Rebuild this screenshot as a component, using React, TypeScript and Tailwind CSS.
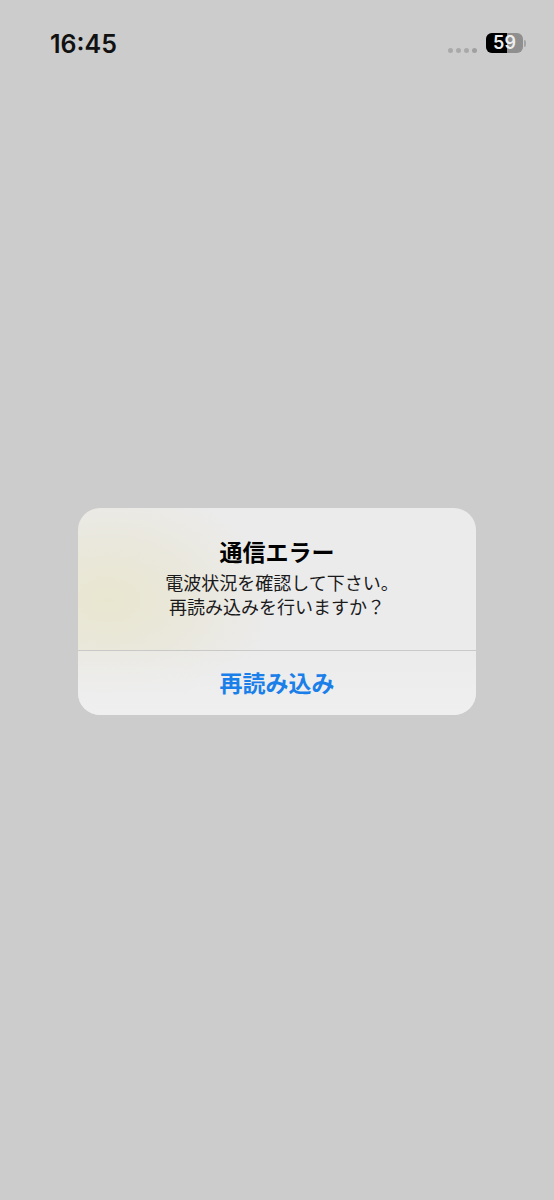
export default function App() {
  return (
    <div className="w-[554px] h-[1200px] bg-[#cccccc] flex flex-col font-['Inter','Noto_Sans_CJK_JP',sans-serif]">
      {/* Status bar */}
      <div className="flex items-center justify-between h-[20px] mt-[33px] pl-[50px] pr-[28px]">
        <span className="mt-[2px] text-[25px] leading-[20px] font-semibold text-[#111111]">16:45</span>
        <div className="flex items-center">
          <div className="flex items-center gap-[3px] mt-[14px] mr-[9px]">
            <span className="w-[5px] h-[5px] rounded-full bg-[#a9a9a9]" />
            <span className="w-[5px] h-[5px] rounded-full bg-[#a9a9a9]" />
            <span className="w-[5px] h-[5px] rounded-full bg-[#a9a9a9]" />
            <span className="w-[5px] h-[5px] rounded-full bg-[#a0a0a0]" />
          </div>
          <div className="relative flex w-[37px] h-[20px] rounded-[6px] overflow-hidden bg-[#8f8f8f]">
            <div className="w-[21px] h-full bg-black" />
            <span className="absolute inset-0 flex items-center justify-center text-[18px] leading-none font-semibold text-[#eeeeee]">59</span>
          </div>
          <div className="w-[2px] h-[7px] ml-[1px] rounded-r-[2px] bg-[#a4a4a4]" />
        </div>
      </div>

      {/* Alert */}
      <div className="mt-[455px] mx-[78px] w-[398px] h-[207px] rounded-[22px] overflow-hidden flex flex-col bg-[#ebebec] bg-[radial-gradient(ellipse_170px_120px_at_30px_92px,#e9e6d0_0%,rgba(233,230,210,0.75)_35%,rgba(235,235,236,0)_100%)]">
        <div className="h-[142px] flex flex-col items-center pt-[31px]">
          <div className="text-[23px] leading-[28px] font-bold text-black">通信エラー</div>
          <div className="mt-[5px] text-[18px] leading-[24px] text-[#1a1a1a] text-center">
            <div className="ml-[5px] -mr-[5px]">電波状況を確認して下さい。</div>
            <div>再読み込みを行いますか？</div>
          </div>
        </div>
        <div className="h-px bg-[#c9c9c7]" />
        <div className="flex-1 flex items-center justify-center pt-[1px] bg-[linear-gradient(to_bottom,rgba(236,236,237,0.4),#efeff0)]">
          <span className="text-[23px] leading-[28px] font-bold text-[#1a7fe8]">再読み込み</span>
        </div>
      </div>
    </div>
  );
}
